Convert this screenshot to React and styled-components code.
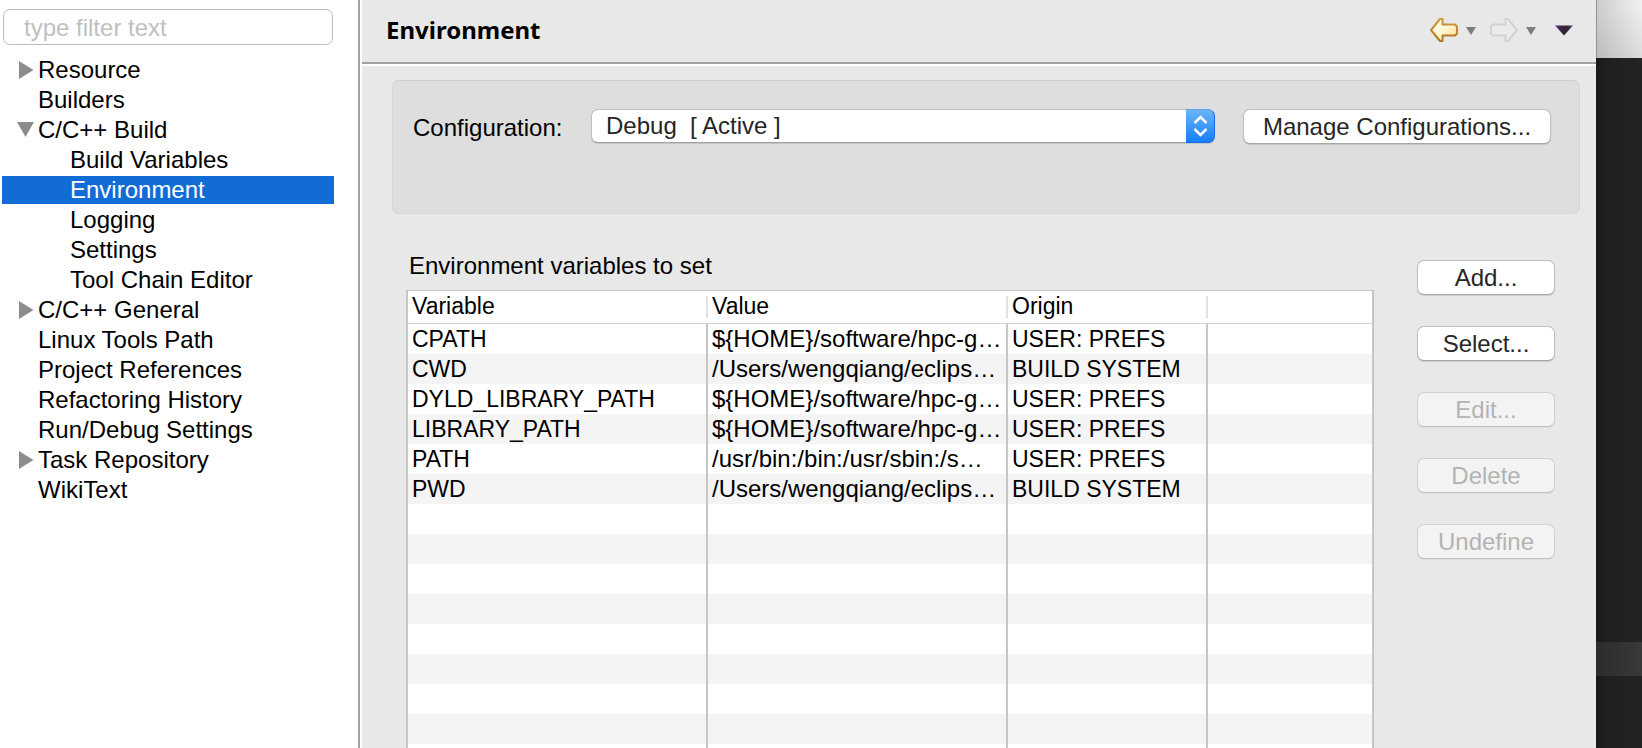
import React, { useState } from "react";
import styled, { createGlobalStyle } from "styled-components";

const GlobalStyle = createGlobalStyle`
  *, *::before, *::after { box-sizing: border-box; }
  body {
    margin: 0;
    background: #222;
    color: #000;
    font-family: "Liberation Sans", Arial, sans-serif;
    font-size: 24px;
    line-height: 28px;
  }
  button, input, select { font: inherit; color: inherit; margin: 0; }
`;

const Screen = styled.div`
  display: flex;
  height: 100vh;
  overflow: hidden;
`;

const Sidebar = styled.aside`
  flex: 0 0 358px;
  padding: 9px 24px 0 2px;
  background: #fff;
`;

const Sash = styled.div`
  flex: 0 0 4px;
  border-left: 2px solid #a3a3a3;
  background: #fff;
`;

const FilterBar = styled.div`
  padding: 0 1px 11px;
`;

const FilterInput = styled.input`
  display: block;
  width: 100%;
  height: 36px;
  padding: 2px 20px 0;
  border: 1px solid #bcbcbc;
  border-radius: 7px;
  background: #fff;
  outline: none;
  &::placeholder { color: #bfbfbf; opacity: 1; }
`;

const TreeList = styled.ul`
  margin: 0;
  padding: 0;
  list-style: none;
`;

const TreeRow = styled.button`
  display: flex;
  align-items: center;
  gap: 4px;
  width: 100%;
  height: 28px;
  margin-bottom: 2px;
  padding: 0 0 0 ${({ $depth }) => 14 + $depth * 32}px;
  border: 0;
  background: ${({ $selected }) => ($selected ? "#116cd6" : "transparent")};
  color: ${({ $selected }) => ($selected ? "#fff" : "#000")};
  text-align: left;
  white-space: nowrap;
`;

const Twisty = styled.svg`
  flex: none;
  width: 18px;
  height: 18px;
  fill: #8c8c8c;
`;

const Page = styled.main`
  flex: 1;
  min-width: 0;
  background: #e8e8e8;
`;

const PageHeader = styled.header`
  display: flex;
  align-items: center;
  justify-content: space-between;
  height: 66px;
  padding: 0 22px 4px 24px;
  border-bottom: 2px solid #fff;
  box-shadow: inset 0 -2px #a0a0a0;
`;

const Title = styled.h1`
  margin: 0;
  font: bold 24px/28px "Noto Sans", "Open Sans", sans-serif;
`;

const Toolbar = styled.div`
  display: flex;
  align-items: center;
  gap: 13px;
`;

const ToolGroup = styled.div`
  display: flex;
  align-items: center;
  gap: 7px;
`;

const ToolButton = styled.button`
  display: flex;
  padding: 0;
  border: 0;
  background: none;
`;

const MenuButton = styled(ToolButton)`
  padding-left: 5px;
`;

const ConfigBox = styled.section`
  display: flex;
  align-items: flex-start;
  height: 134px;
  margin: 14px 16px 0 30px;
  padding: 28px 28px 0 20px;
  border: 1px solid #d5d5d5;
  border-top-color: #cdcdcd;
  border-radius: 7px;
  background: #dedede;
`;

const ConfigLabel = styled.label`
  flex: 0 0 178px;
  padding-top: 5px;
`;

const SelectWrap = styled.div`
  position: relative;
  flex: 1;
  margin-right: 28px;
`;

const Select = styled.select`
  display: block;
  width: 100%;
  height: 34px;
  padding: 0 40px 0 14px;
  border: 1px solid #bfbfbf;
  border-bottom-color: #a0a0a0;
  border-radius: 7px;
  background: #fff;
  box-shadow: 0 1px 1px #0000001f;
  color: #262626;
  appearance: none;
`;

const Stepper = styled.span`
  position: absolute;
  top: 0;
  right: 0;
  display: grid;
  place-items: center;
  width: 29px;
  height: 34px;
  border: 1px solid #1a6ff0;
  border-top-color: #5ba5ee;
  border-left: 0;
  border-radius: 0 7px 7px 0;
  background: linear-gradient(#6cb3f8, #157efb);
  pointer-events: none;
`;

const PushButton = styled.button`
  height: 35px;
  width: ${({ $wide }) => ($wide ? "308px" : "100%")};
  padding: 0;
  border: 1px solid #bfbfbf;
  border-bottom-color: #a6a6a6;
  border-radius: 7px;
  background: #fff;
  box-shadow: 0 1px 1px #0000001f;
  color: #262626;
  white-space: nowrap;
  &:disabled {
    border-color: #d0d0d0;
    border-bottom-color: #c0c0c0;
    background: #f3f3f3;
    box-shadow: 0 1px 1px #0000000d;
    color: #b3b3b3;
  }
`;

const Variables = styled.section`
  display: flex;
  align-items: flex-start;
  gap: 43px;
  padding: 38px 41px 0 44px;
`;

const VariablesMain = styled.div`
  flex: 1;
  min-width: 0;
`;

const SectionLabel = styled.h2`
  margin: 0;
  padding: 0 3px 10px;
  font-size: 24px;
  font-weight: normal;
`;

const Table = styled.table`
  width: 100%;
  border: 2px solid #c6c6c6;
  border-top: 1px solid #c6c6c6;
  border-spacing: 0;
  table-layout: fixed;
  background: #fff;
`;

const Column = styled.col`
  width: ${({ $width }) => $width};
`;

const HeadCell = styled.th`
  height: 33px;
  padding: 0 0 2px 4px;
  border-bottom: 1px solid #d0d0d0;
  background: linear-gradient(#e2e2e2, #e2e2e2) right 5px / 2px 22px no-repeat;
  font-size: 23px;
  font-weight: normal;
  text-align: left;
  &:last-child { background: none; }
`;

const Cell = styled.td`
  height: 30px;
  padding: 0 0 1px 4px;
  border-right: 2px solid #c6c6c6;
  font-size: ${({ $path }) => ($path ? 24 : 23)}px;
  overflow: hidden;
  white-space: nowrap;
  text-overflow: ellipsis;
  &:last-child { border-right: 0; }
`;

const Row = styled.tr`
  background: ${({ $striped }) => ($striped ? "#f4f4f4" : "#fff")};
`;

const Actions = styled.div`
  display: flex;
  flex: 0 0 138px;
  flex-direction: column;
  gap: 31px;
  padding-top: 8px;
`;

const Backdrop = styled.div`
  display: flex;
  flex: 0 0 46px;
  flex-direction: column;
  background: linear-gradient(90deg, #191919, #202020 14px, #232323);
`;

const BackdropLight = styled.div`
  height: 58px;
  border-left: 1px solid #929292;
  background: linear-gradient(165deg, transparent 20%, #00000018), linear-gradient(90deg, #cbcbcb, #f2f2f2);
`;

const BackdropBand = styled.div`
  height: 34px;
  margin-top: 584px;
  background: linear-gradient(90deg, #2c2c2c, #393939);
`;

const TREE = [
  { name: "Resource", depth: 0, state: "closed" },
  { name: "Builders", depth: 0 },
  { name: "C/C++ Build", depth: 0, state: "open" },
  { name: "Build Variables", depth: 1 },
  { name: "Environment", depth: 1 },
  { name: "Logging", depth: 1 },
  { name: "Settings", depth: 1 },
  { name: "Tool Chain Editor", depth: 1 },
  { name: "C/C++ General", depth: 0, state: "closed" },
  { name: "Linux Tools Path", depth: 0 },
  { name: "Project References", depth: 0 },
  { name: "Refactoring History", depth: 0 },
  { name: "Run/Debug Settings", depth: 0 },
  { name: "Task Repository", depth: 0, state: "closed" },
  { name: "WikiText", depth: 0 },
];

const VARIABLES = [
  ["CPATH", "${HOME}/software/hpc-g…", "USER: PREFS"],
  ["CWD", "/Users/wengqiang/eclips…", "BUILD SYSTEM"],
  ["DYLD_LIBRARY_PATH", "${HOME}/software/hpc-g…", "USER: PREFS"],
  ["LIBRARY_PATH", "${HOME}/software/hpc-g…", "USER: PREFS"],
  ["PATH", "/usr/bin:/bin:/usr/sbin:/s…", "USER: PREFS"],
  ["PWD", "/Users/wengqiang/eclips…", "BUILD SYSTEM"],
];

const BLANK_ROWS = Array.from({ length: 9 }, () => ["", "", ""]);

const ACTIONS = [
  { label: "Add...", enabled: true },
  { label: "Select...", enabled: true },
  { label: "Edit...", enabled: false },
  { label: "Delete", enabled: false },
  { label: "Undefine", enabled: false },
];

function TreeTwisty({ state }) {
  return (
    <Twisty viewBox="0 0 18 18" aria-hidden="true">
      {state === "closed" && <path d="M3 0 17.500 9 3 18Z" />}
      {state === "open" && <path d="M1 1H18L9.500 16Z" />}
    </Twisty>
  );
}

function ArrowIcon({ forward }) {
  return (
    <svg width="30" height="26" viewBox="0 0 30 26" aria-hidden="true">
      <defs>
        <linearGradient id="backFill" x1="0" y1="0" x2="1" y2="1">
          <stop offset="0" stopColor="#fff" />
          <stop offset="0.500" stopColor="#fff6cf" />
          <stop offset="1" stopColor="#fbdc85" />
        </linearGradient>
        <linearGradient id="backStroke" x1="0" y1="0" x2="0" y2="1">
          <stop offset="0" stopColor="#cf9a3c" />
          <stop offset="1" stopColor="#b07624" />
        </linearGradient>
      </defs>
      <path
        d={
          forward
            ? "M16.500 2H19L28 13 19 24H16.500V18.500H4L2 16.500V9.500L4 7.500H16.500Z"
            : "M13.500 2H11L2 13 11 24H13.500V18.500H26L28 16.500V9.500L26 7.500H13.500Z"
        }
        fill={forward ? "#ebebeb" : "url(#backFill)"}
        stroke={forward ? "#d2d2d2" : "url(#backStroke)"}
        strokeWidth="2"
        strokeLinejoin="round"
      />
    </svg>
  );
}

function CaretIcon() {
  return (
    <svg width="10" height="12" viewBox="0 0 10 12" aria-hidden="true">
      <path d="M0 3H10L5 11Z" fill="#7c7c7c" />
    </svg>
  );
}

function MenuIcon() {
  return (
    <svg width="20" height="12" viewBox="0 0 20 12" aria-hidden="true">
      <defs>
        <linearGradient id="menuFill">
          <stop offset="0" stopColor="#6a3fb0" />
          <stop offset="0.300" stopColor="#3a2440" />
          <stop offset="0.700" stopColor="#33222f" />
          <stop offset="1" stopColor="#5b4a86" />
        </linearGradient>
      </defs>
      <path d="M1 1.500H19L10 11.500Z" fill="url(#menuFill)" />
    </svg>
  );
}

export default function App() {
  const [selected, setSelected] = useState("Environment");

  return (
    <>
      <GlobalStyle />
      <Screen>
        <Sidebar>
          <FilterBar>
            <FilterInput type="text" placeholder="type filter text" aria-label="Filter" />
          </FilterBar>
          <TreeList>
            {TREE.map(({ name, depth, state }) => (
              <li key={name}>
                <TreeRow
                  type="button"
                  $depth={depth}
                  $selected={name === selected}
                  aria-expanded={state ? state === "open" : undefined}
                  onClick={() => setSelected(name)}
                >
                  <TreeTwisty state={state} />
                  {name}
                </TreeRow>
              </li>
            ))}
          </TreeList>
        </Sidebar>
        <Sash />
        <Page>
          <PageHeader>
            <Title>Environment</Title>
            <Toolbar>
              <ToolGroup>
                <ToolButton type="button" aria-label="Back"><ArrowIcon /></ToolButton>
                <ToolButton type="button" aria-label="Back history"><CaretIcon /></ToolButton>
              </ToolGroup>
              <ToolGroup>
                <ToolButton type="button" aria-label="Forward" disabled><ArrowIcon forward /></ToolButton>
                <ToolButton type="button" aria-label="Forward history"><CaretIcon /></ToolButton>
              </ToolGroup>
              <MenuButton type="button" aria-label="Menu"><MenuIcon /></MenuButton>
            </Toolbar>
          </PageHeader>

          <ConfigBox>
            <ConfigLabel htmlFor="configuration">Configuration:</ConfigLabel>
            <SelectWrap>
              <Select id="configuration">
                <option>{"Debug\u00a0 [ Active ]"}</option>
              </Select>
              <Stepper aria-hidden="true">
                <svg width="15" height="22" viewBox="0 0 15 22">
                  <path
                    d="M1.500 8 7.500 2 13.500 8M1.500 14 7.500 20 13.500 14"
                    fill="none"
                    stroke="#fff"
                    strokeWidth="2.500"
                  />
                </svg>
              </Stepper>
            </SelectWrap>
            <PushButton type="button" $wide>Manage Configurations...</PushButton>
          </ConfigBox>

          <Variables>
            <VariablesMain>
              <SectionLabel id="variables-label">Environment variables to set</SectionLabel>
              <Table aria-labelledby="variables-label">
                <colgroup>
                  <Column $width="300px" />
                  <Column $width="300px" />
                  <Column $width="200px" />
                  <Column $width="auto" />
                </colgroup>
                <thead>
                  <tr>
                    <HeadCell scope="col">Variable</HeadCell>
                    <HeadCell scope="col">Value</HeadCell>
                    <HeadCell scope="col">Origin</HeadCell>
                    <HeadCell as="td" />
                  </tr>
                </thead>
                <tbody>
                  {[...VARIABLES, ...BLANK_ROWS].map(([name, value, origin], index) => (
                    <Row key={index} $striped={index % 2 === 1}>
                      <Cell>{name}</Cell>
                      <Cell $path>{value}</Cell>
                      <Cell>{origin}</Cell>
                      <Cell />
                    </Row>
                  ))}
                </tbody>
              </Table>
            </VariablesMain>
            <Actions>
              {ACTIONS.map(({ label, enabled }) => (
                <PushButton key={label} type="button" disabled={!enabled}>{label}</PushButton>
              ))}
            </Actions>
          </Variables>
        </Page>
        <Backdrop>
          <BackdropLight />
          <BackdropBand />
        </Backdrop>
      </Screen>
    </>
  );
}
